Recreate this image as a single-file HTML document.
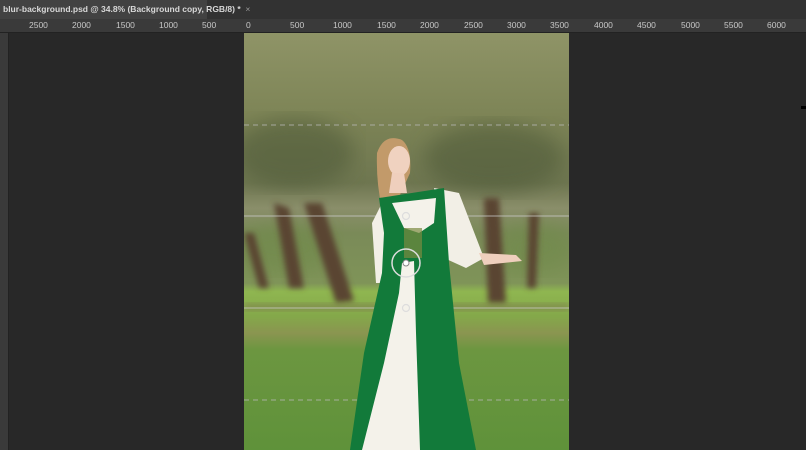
<!DOCTYPE html>
<html><head><style>
body{margin:0;width:806px;height:450px;overflow:hidden;background:#282828;font-family:"Liberation Sans",sans-serif;position:relative}
#tabbar{position:absolute;left:0;top:0;width:806px;height:19px;background:#323232}
#tab{position:absolute;left:0;top:0;width:207px;height:19px;background:#424242;color:#d8d8d8;font-size:8.5px;font-weight:bold;line-height:19px;padding-left:3px;box-sizing:border-box;white-space:nowrap}
#rul{position:absolute;left:0;top:19px;width:806px;height:13px;background:#3a3a3a;border-bottom:1px solid #222}
#rul span{position:absolute;top:1px;font-size:8.5px;color:#c8c8c8}
#lr{position:absolute;left:0;top:33px;width:8px;height:417px;background:#3a3a3a;border-right:1px solid #222}
</style></head><body>
<div id="tabbar"><div id="tab">blur-background.psd @ 34.8% (Background copy, RGB/8) * &nbsp;<span style="color:#999;font-weight:normal">×</span></div></div>
<div id="rul">
<span style="left:29px">2500</span><span style="left:72px">2000</span><span style="left:116px">1500</span><span style="left:159px">1000</span><span style="left:202px">500</span><span style="left:246px">0</span><span style="left:290px">500</span><span style="left:333px">1000</span><span style="left:377px">1500</span><span style="left:420px">2000</span><span style="left:464px">2500</span><span style="left:507px">3000</span><span style="left:550px">3500</span><span style="left:594px">4000</span><span style="left:637px">4500</span><span style="left:681px">5000</span><span style="left:724px">5500</span><span style="left:767px">6000</span>
</div>
<div id="lr"></div>
<svg style="position:absolute;left:244px;top:33px" width="325" height="417" viewBox="0 0 325 417">
<defs>
<linearGradient id="bg" x1="0" y1="0" x2="0" y2="1">
<stop offset="0" stop-color="#8f9467"/><stop offset="0.2" stop-color="#7d8456"/><stop offset="0.36" stop-color="#6e7650"/><stop offset="0.42" stop-color="#8a8e6a"/><stop offset="0.48" stop-color="#7a8a58"/><stop offset="0.6" stop-color="#7f9458"/><stop offset="0.62" stop-color="#8fb650"/><stop offset="0.68" stop-color="#84a84a"/><stop offset="0.72" stop-color="#8a9550"/><stop offset="0.76" stop-color="#6c9640"/><stop offset="1" stop-color="#5f923a"/>
</linearGradient>
<filter id="b3"><feGaussianBlur stdDeviation="3"/></filter>
<filter id="b8"><feGaussianBlur stdDeviation="10"/></filter>
</defs>
<rect width="325" height="417" fill="url(#bg)"/>
<ellipse cx="50" cy="120" rx="60" ry="35" fill="#4a5535" opacity=".5" filter="url(#b8)"/>
<ellipse cx="250" cy="125" rx="70" ry="35" fill="#4a5535" opacity=".5" filter="url(#b8)"/>
<ellipse cx="40" cy="215" rx="50" ry="25" fill="#6f8a48" opacity=".6" filter="url(#b8)"/>
<ellipse cx="290" cy="215" rx="40" ry="25" fill="#6f8a48" opacity=".6" filter="url(#b8)"/>
<g filter="url(#b3)" fill="#5a4530">
<path d="M60 170 L78 170 L110 268 L92 270Z"/>
<path d="M240 165 L255 165 L262 270 L244 270Z"/>
<path d="M30 170 L45 175 L60 255 L45 255Z"/>
<path d="M285 180 L295 180 L292 255 L283 255Z"/>
<path d="M0 200 L15 255 L25 255 L10 200Z"/>
</g>
<rect x="0" y="270" width="325" height="8" fill="#7a6a50" opacity=".4" filter="url(#b3)"/>
<line x1="0" y1="92" x2="325" y2="92" stroke="#bbb" stroke-dasharray="5 4" stroke-width=".8"/>
<line x1="0" y1="183" x2="325" y2="183" stroke="#ccc" stroke-width=".8"/>
<line x1="0" y1="275" x2="325" y2="275" stroke="#ccc" stroke-width=".8"/>
<line x1="0" y1="367" x2="325" y2="367" stroke="#bbb" stroke-dasharray="5 4" stroke-width=".8"/>
<path d="M133 120 Q140 100 158 107 Q168 115 166 140 L150 175 L138 175 Q132 150 133 120Z" fill="#c29a6a"/>
<ellipse cx="155" cy="128" rx="11" ry="15" fill="#f0d2c0"/>
<path d="M148 140 L160 140 L163 160 L145 160Z" fill="#efcfbd"/>
<path d="M138 170 L128 190 L132 250 L145 250 L150 180Z" fill="#f2efe6"/>
<path d="M190 155 L215 160 L240 225 L222 235 L200 225 L195 180Z" fill="#f2efe6"/>
<path d="M235 220 L272 222 L278 228 L240 232Z" fill="#efcfbd"/>
<path d="M135 165 L200 155 L205 230 L215 330 L232 417 L106 417 L120 320 L138 240 L140 200Z" fill="#127a3a"/>
<path d="M148 170 L192 165 L190 190 L175 200 L160 195 Z" fill="#f4f2ea"/>
<path d="M158 230 L170 228 L172 300 L176 417 L118 417 L140 330 L155 260Z" fill="#f4f2ea"/>
<rect x="160" y="195" width="18" height="30" fill="#7a8a40" opacity=".7"/>
<circle cx="162" cy="183" r="3.5" fill="none" stroke="#ddd" stroke-width="1.2"/>
<circle cx="162" cy="275" r="3.5" fill="none" stroke="#ddd" stroke-width="1.2"/>
<circle cx="162" cy="230" r="14" fill="none" stroke="#ddd" stroke-width="1.5"/>
<circle cx="162" cy="230" r="3" fill="#fff" stroke="#888"/>
</svg>
<div style="position:absolute;left:801px;top:106px;width:5px;height:3px;background:#000"></div>
</body></html>
